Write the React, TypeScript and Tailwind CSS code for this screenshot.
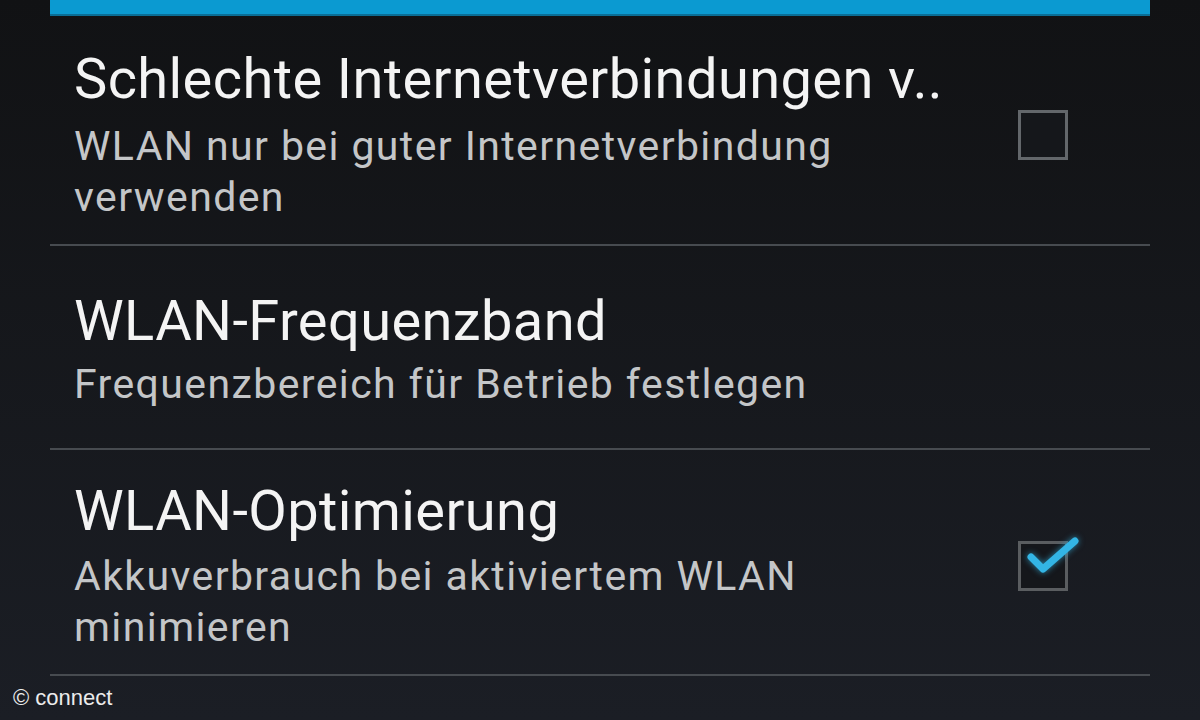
import { Fragment } from "react";

type Setting = {
  title: string;
  summary: string[];
  checkbox?: "on" | "off";
  pad: string;
  gap: string;
  bottom: string;
};

const settings: Setting[] = [
  {
    title: "Schlechte Internetverbindungen v..",
    summary: ["WLAN nur bei guter Internetverbindung", "verwenden"],
    checkbox: "off",
    pad: "pt-[31px]",
    gap: "mt-[10px]",
    bottom: "pb-[21px]",
  },
  {
    title: "WLAN-Frequenzband",
    summary: ["Frequenzbereich für Betrieb festlegen"],
    pad: "pt-[43px]",
    gap: "mt-[6px]",
    bottom: "pb-[38px]",
  },
  {
    title: "WLAN-Optimierung",
    summary: ["Akkuverbrauch bei aktiviertem WLAN", "minimieren"],
    checkbox: "on",
    pad: "pt-[29px]",
    gap: "mt-[8px]",
    bottom: "pb-[21px]",
  },
];

function CheckBox({ checked }: { checked: boolean }) {
  return (
    <div className="relative h-[50px] w-[50px] shrink-0">
      <div
        className={`h-full w-full border-[3px] ${checked ? "border-[#5a5d60]" : "border-[#63676b]"} bg-[#15171b]`}
      />
      {checked && (
        <svg
          className="absolute -top-[4px] left-[8px] h-[40px] w-[54px] drop-shadow-[0_0_3px_rgba(51,181,229,0.7)]"
          viewBox="0 0 54 40"
          fill="none"
        >
          <path
            d="M5 20 L17 32 L49 4"
            stroke="#33b5e5"
            strokeWidth="7"
            strokeLinecap="round"
            strokeLinejoin="round"
          />
        </svg>
      )}
    </div>
  );
}

export default function App() {
  return (
    <div
      className="flex h-[720px] w-[1200px] flex-col overflow-hidden bg-gradient-to-b from-[#111214] to-[#1b1e25]"
      style={{ fontFamily: "Roboto, 'Noto Sans', sans-serif" }}
    >
      <div className="mx-[50px] h-[16px] shrink-0 border-b-2 border-[#0a6e96] bg-[#0b9ad1]" />

      {settings.map((s) => (
        <Fragment key={s.title}>
          <div className={`mx-[50px] flex items-center pl-[24px] pr-[82px] ${s.pad} ${s.bottom}`}>
            <div className="flex-1">
              <div className="whitespace-nowrap text-[56px] leading-[64px] tracking-[0.4px] text-[#f4f4f4]">
                {s.title}
              </div>
              <div className={`${s.gap} text-[41px] leading-[51px] tracking-[1.4px] text-[#c4c6c8]`}>
                {s.summary.map((line) => (
                  <div key={line} className="whitespace-nowrap">
                    {line}
                  </div>
                ))}
              </div>
            </div>
            {s.checkbox && <CheckBox checked={s.checkbox === "on"} />}
          </div>
          <div className="mx-[50px] h-[2px] shrink-0 bg-[#474b50]" />
        </Fragment>
      ))}

      <div
        className="mt-[10px] pl-[13px] text-[22px] leading-[24px] text-[#ececec]"
        style={{ fontFamily: "'Liberation Sans', Arial, sans-serif" }}
      >
        © connect
      </div>
    </div>
  );
}
